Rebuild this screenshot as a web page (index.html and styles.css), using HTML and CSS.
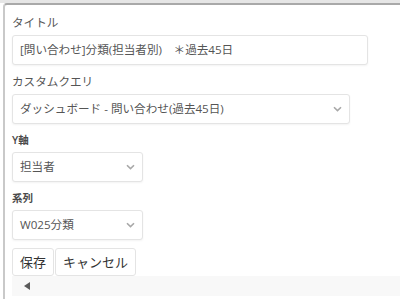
FILE: index.html
```html
<!DOCTYPE html>
<html lang="ja">
<head>
<meta charset="utf-8">
<link rel="stylesheet" href="styles.css">
</head>
<body>
<div class="topbar"></div>
<div class="panel">
  <div class="group">
    <label class="label">タイトル</label>
    <div class="control title-input">[問い合わせ]分類(担当者別)　＊過去45日</div>
  </div>
  <div class="group">
    <label class="label">カスタムクエリ</label>
    <div class="control select wide">
      <span>ダッシュボード - 問い合わせ(過去45日)</span>
      <svg class="chev" width="9" height="6" viewBox="0 0 9 6"><path d="M1 1.2 L4.5 4.6 L8 1.2" fill="none" stroke="#a8a8a8" stroke-width="1.6"/></svg>
    </div>
  </div>
  <div class="group">
    <label class="label small">Y軸</label>
    <div class="control select narrow">
      <span>担当者</span>
      <svg class="chev" width="9" height="6" viewBox="0 0 9 6"><path d="M1 1.2 L4.5 4.6 L8 1.2" fill="none" stroke="#a8a8a8" stroke-width="1.6"/></svg>
    </div>
  </div>
  <div class="group">
    <label class="label small">系列</label>
    <div class="control select narrow">
      <span>W025分類</span>
      <svg class="chev" width="9" height="6" viewBox="0 0 9 6"><path d="M1 1.2 L4.5 4.6 L8 1.2" fill="none" stroke="#a8a8a8" stroke-width="1.6"/></svg>
    </div>
  </div>
  <div class="buttons">
    <button class="btn">保存</button>
    <button class="btn">キャンセル</button>
  </div>
  <div class="scrollbar">
    <span class="arrow"></span>
  </div>
</div>
</body>
</html>
```

FILE: styles.css
```css
html, body {
  margin: 0;
  padding: 0;
  background: #ffffff;
  height: 299px;
  overflow: hidden;
  font-family: "Open Sans", "Noto Sans CJK JP", sans-serif;
  color: #555555;
}

.topbar {
  height: 3px;
  background: #e6e6e6;
}

.panel {
  margin-left: 3px;
  border-left: 2px solid #c9c9c9;
  border-top: 2px solid #a9a9a9;
  border-top-left-radius: 4px;
  padding: 9px 0 0 7px;
  height: 300px;
  box-sizing: border-box;
}

.group {
  display: flex;
  flex-direction: column;
  align-items: flex-start;
  margin-bottom: 8px;
}

.label {
  display: block;
  font-size: 11.6px;
  line-height: 17px;
  margin-bottom: 4px;
  color: #555555;
}

.label.small {
  font-size: 10.5px;
  font-weight: 600;
  line-height: 16px;
  margin-bottom: 4px;
  color: #4a4a4a;
}

.control {
  box-sizing: border-box;
  height: 30px;
  border: 1px solid #e4e4e4;
  border-radius: 3px;
  box-shadow: 0 1px 2px rgba(0, 0, 0, 0.05);
  padding: 0 7px;
  font-size: 11.6px;
  line-height: 28px;
  color: #555555;
  background: #ffffff;
  white-space: nowrap;
}

.title-input {
  width: 356px;
}

.select {
  display: flex;
  align-items: center;
  justify-content: space-between;
}

.select.wide {
  width: 338px;
}

.select.narrow {
  width: 131px;
}

.chev {
  display: block;
}

.buttons {
  display: flex;
  gap: 1px;
}

.btn {
  box-sizing: border-box;
  height: 28px;
  padding: 0 7px;
  border: 1px solid #e4e4e4;
  border-radius: 3px;
  background: #ffffff;
  font-family: "Open Sans", "Noto Sans CJK JP", sans-serif;
  font-size: 13px;
  color: #333333;
  line-height: 26px;
}

.scrollbar {
  height: 20px;
  background: #f8f8f8;
  display: flex;
  align-items: center;
  padding-left: 11px;
}

.arrow {
  width: 0;
  height: 0;
  margin-left: 1px;
  border-top: 4.5px solid transparent;
  border-bottom: 4.5px solid transparent;
  border-right: 6px solid #5a5a5a;
}
```
